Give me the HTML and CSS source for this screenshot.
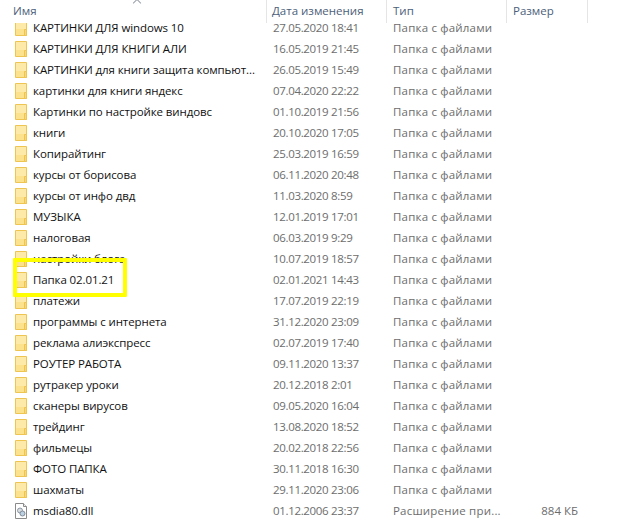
FILE: index.html
```html
<!DOCTYPE html>
<html lang="ru">
<head>
    <meta charset="UTF-8">
    <title>Папка с файлами</title>
    <link rel="stylesheet" href="styles.css">
</head>
<body>
    <svg class="defs" width="0" height="0">
        <symbol id="folder" viewBox="0 0 12 16">
            <path d="M.5.5h11v15H.5z" fill="#fde28e" stroke="#efc552"/>
            <path d="M1 1h10v8H1z" fill="#fde9a8"/>
            <path d="M9.5 9.5h2v6h-2z" fill="#fbd873" stroke="#efc552"/>
        </symbol>
        <symbol id="dll" viewBox="0 0 12 16">
            <path d="M.5.5h8l3 3v12H.5z" fill="#fff" stroke="#8a8a8a"/>
            <path d="M8.5.5v3h3" fill="#eee" stroke="#8a8a8a"/>
            <circle cx="5" cy="7.5" r="2.5" fill="#d8dde2" stroke="#8d97a3"/>
            <circle cx="7.5" cy="10.5" r="2.5" fill="#bcd0e4" stroke="#7f8a96"/>
        </symbol>
    </svg>

    <div class="explorer">
        <span class="sort-arrow"></span>
        <div class="head">
            <div class="col col-name">Имя</div>
            <div class="col col-date">Дата изменения</div>
            <div class="col col-type">Тип</div>
            <div class="col col-size">Размер</div>
        </div>

        <div class="row"><svg class="ico"><use href="#folder"/></svg><div class="name">КАРТИНКИ ДЛЯ windows 10</div><div class="date">27.05.2020 18:41</div><div class="type">Папка с файлами</div><div class="size"></div></div>
        <div class="row"><svg class="ico"><use href="#folder"/></svg><div class="name">КАРТИНКИ ДЛЯ КНИГИ АЛИ</div><div class="date">16.05.2019 21:45</div><div class="type">Папка с файлами</div><div class="size"></div></div>
        <div class="row"><svg class="ico"><use href="#folder"/></svg><div class="name">КАРТИНКИ для книги защита компьют...</div><div class="date">26.05.2019 15:49</div><div class="type">Папка с файлами</div><div class="size"></div></div>
        <div class="row"><svg class="ico"><use href="#folder"/></svg><div class="name">картинки для книги яндекс</div><div class="date">07.04.2020 22:22</div><div class="type">Папка с файлами</div><div class="size"></div></div>
        <div class="row"><svg class="ico"><use href="#folder"/></svg><div class="name">Картинки по настройке виндовс</div><div class="date">01.10.2019 21:56</div><div class="type">Папка с файлами</div><div class="size"></div></div>
        <div class="row"><svg class="ico"><use href="#folder"/></svg><div class="name">книги</div><div class="date">20.10.2020 17:05</div><div class="type">Папка с файлами</div><div class="size"></div></div>
        <div class="row"><svg class="ico"><use href="#folder"/></svg><div class="name">Копирайтинг</div><div class="date">25.03.2019 16:59</div><div class="type">Папка с файлами</div><div class="size"></div></div>
        <div class="row"><svg class="ico"><use href="#folder"/></svg><div class="name">курсы от борисова</div><div class="date">06.11.2020 20:48</div><div class="type">Папка с файлами</div><div class="size"></div></div>
        <div class="row"><svg class="ico"><use href="#folder"/></svg><div class="name">курсы от инфо двд</div><div class="date">11.03.2020 8:59</div><div class="type">Папка с файлами</div><div class="size"></div></div>
        <div class="row"><svg class="ico"><use href="#folder"/></svg><div class="name">МУЗЫКА</div><div class="date">12.01.2019 17:01</div><div class="type">Папка с файлами</div><div class="size"></div></div>
        <div class="row"><svg class="ico"><use href="#folder"/></svg><div class="name">налоговая</div><div class="date">06.03.2019 9:29</div><div class="type">Папка с файлами</div><div class="size"></div></div>
        <div class="row"><svg class="ico"><use href="#folder"/></svg><div class="name">настройки блога</div><div class="date">10.07.2019 18:57</div><div class="type">Папка с файлами</div><div class="size"></div></div>
        <div class="row"><svg class="ico"><use href="#folder"/></svg><div class="name">Папка 02.01.21</div><div class="date">02.01.2021 14:43</div><div class="type">Папка с файлами</div><div class="size"></div></div>
        <div class="row"><svg class="ico"><use href="#folder"/></svg><div class="name">платежи</div><div class="date">17.07.2019 22:19</div><div class="type">Папка с файлами</div><div class="size"></div></div>
        <div class="row"><svg class="ico"><use href="#folder"/></svg><div class="name">программы с интернета</div><div class="date">31.12.2020 23:09</div><div class="type">Папка с файлами</div><div class="size"></div></div>
        <div class="row"><svg class="ico"><use href="#folder"/></svg><div class="name">реклама алиэкспресс</div><div class="date">02.07.2019 17:40</div><div class="type">Папка с файлами</div><div class="size"></div></div>
        <div class="row"><svg class="ico"><use href="#folder"/></svg><div class="name">РОУТЕР РАБОТА</div><div class="date">09.11.2020 13:37</div><div class="type">Папка с файлами</div><div class="size"></div></div>
        <div class="row"><svg class="ico"><use href="#folder"/></svg><div class="name">рутракер уроки</div><div class="date">20.12.2018 2:01</div><div class="type">Папка с файлами</div><div class="size"></div></div>
        <div class="row"><svg class="ico"><use href="#folder"/></svg><div class="name">сканеры вирусов</div><div class="date">09.05.2020 16:04</div><div class="type">Папка с файлами</div><div class="size"></div></div>
        <div class="row"><svg class="ico"><use href="#folder"/></svg><div class="name">трейдинг</div><div class="date">13.08.2020 18:52</div><div class="type">Папка с файлами</div><div class="size"></div></div>
        <div class="row"><svg class="ico"><use href="#folder"/></svg><div class="name">фильмецы</div><div class="date">20.02.2018 22:56</div><div class="type">Папка с файлами</div><div class="size"></div></div>
        <div class="row"><svg class="ico"><use href="#folder"/></svg><div class="name">ФОТО ПАПКА</div><div class="date">30.11.2018 16:30</div><div class="type">Папка с файлами</div><div class="size"></div></div>
        <div class="row"><svg class="ico"><use href="#folder"/></svg><div class="name">шахматы</div><div class="date">29.11.2020 23:06</div><div class="type">Папка с файлами</div><div class="size"></div></div>
        <div class="row"><svg class="ico"><use href="#dll"/></svg><div class="name">msdia80.dll</div><div class="date">01.12.2006 23:37</div><div class="type">Расширение при...</div><div class="size">884 КБ</div></div>

        <div class="marker"></div>
    </div>
</body>
</html>
```

FILE: styles.css
```css
html, body {
    margin: 0;
    padding: 0;
    background: #fff;
}
body {
    width: 630px;
    height: 532px;
    overflow: hidden;
    font-family: "Open Sans", "Noto Sans", sans-serif;
    font-size: 11.5px;
}
.defs {
    display: block;
}
.explorer {
    position: relative;
    height: 532px;
}
.head {
    position: relative;
    z-index: 1;
    display: flex;
    height: 23px;
    margin-bottom: -6px;
    background: #fff;
    color: #4c607a;
    line-height: 22px;
}
.col {
    box-sizing: border-box;
    padding-left: 5px;
    border-right: 1px solid #e5e5e5;
}
.col-name {
    width: 267px;
    padding-left: 13px;
}
.col-date {
    width: 120px;
    padding-left: 5px;
}
.col-type {
    width: 120px;
    padding-left: 6px;
}
.col-size {
    width: 81px;
    padding-left: 6px;
}
.sort-arrow {
    position: absolute;
    z-index: 2;
    top: 0;
    left: 134px;
    width: 5px;
    height: 5px;
    border-top: 1px solid #9aa0a8;
    border-left: 1px solid #9aa0a8;
    transform: rotate(45deg);
}
.row {
    display: flex;
    align-items: center;
    height: 21px;
    color: #6d6d6d;
}
.ico {
    flex: none;
    width: 12px;
    height: 16px;
    margin-left: 15px;
    margin-right: 6px;
}
.name {
    width: 240px;
    color: #111;
    letter-spacing: -0.1px;
}
.date {
    width: 120px;
    letter-spacing: -0.33px;
}
.type {
    width: 120px;
    letter-spacing: 0.2px;
}
.size {
    width: 65px;
    text-align: right;
}
.marker {
    position: absolute;
    top: 258px;
    left: 13px;
    width: 106px;
    height: 31px;
    border: 4px solid #ffff00;
    border-radius: 1px;
    z-index: 3;
}
```
